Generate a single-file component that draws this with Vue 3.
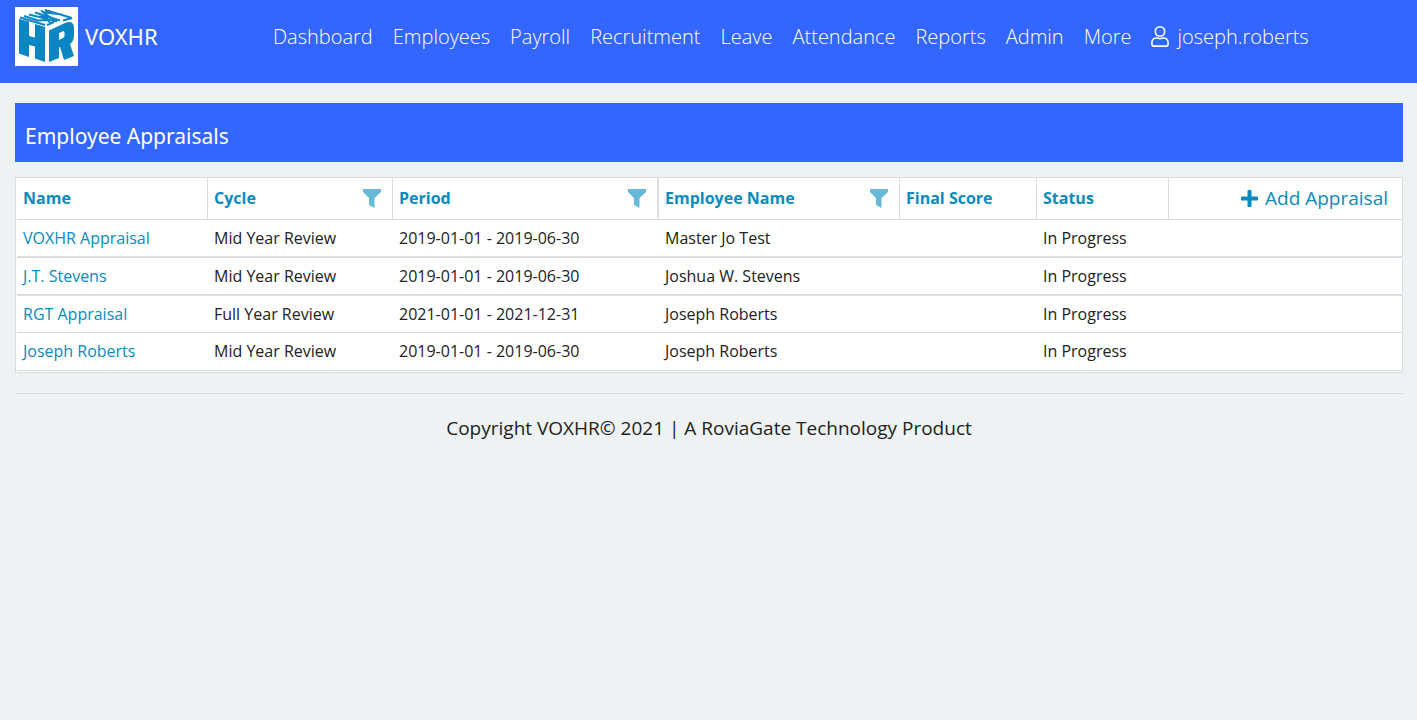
<script setup>
const navItems = ['Dashboard', 'Employees', 'Payroll', 'Recruitment', 'Leave', 'Attendance', 'Reports', 'Admin', 'More']

const columns = [
  { label: 'Name', key: 'name' },
  { label: 'Cycle', key: 'cycle', filter: true },
  { label: 'Period', key: 'period', filter: true },
  { label: 'Employee Name', key: 'employee', filter: true },
  { label: 'Final Score', key: 'score' },
  { label: 'Status', key: 'status' },
]

const rows = [
  { name: 'VOXHR Appraisal', cycle: 'Mid Year Review', period: '2019-01-01 - 2019-06-30', employee: 'Master Jo Test', score: '', status: 'In Progress' },
  { name: 'J.T. Stevens', cycle: 'Mid Year Review', period: '2019-01-01 - 2019-06-30', employee: 'Joshua W. Stevens', score: '', status: 'In Progress' },
  { name: 'RGT Appraisal', cycle: 'Full Year Review', period: '2021-01-01 - 2021-12-31', employee: 'Joseph Roberts', score: '', status: 'In Progress' },
  { name: 'Joseph Roberts', cycle: 'Mid Year Review', period: '2019-01-01 - 2019-06-30', employee: 'Joseph Roberts', score: '', status: 'In Progress' },
]
</script>

<template>
  <div class="page">
    <header class="topbar">
      <a class="brand" href="#">
        <svg class="logo" viewBox="0 0 63 59" aria-hidden="true">
          <rect width="63" height="59" fill="#fff" />
          <g fill="#0a86c3">
            <path d="M4 12l10 2.500V29l6 1.500V17l10 3v35l-10-3.500V39.500l-6-1.500v12L4 46.500z" />
            <path fill-rule="evenodd" d="M34 23.500L50 16c5-2 9-1 9 5v7c0 4-1 7-4 9l4 12-10 4-4-13-1 .5V51l-10 4zM44 26v7l4-2c1-.5 1.500-1.500 1.500-2.500v-3c0-1.500-1-1.500-2-1z" />
          </g>
          <g fill="none" stroke="#0a86c3" stroke-width="2">
            <path d="M5 10.500l25 7.500M9 9l14 4.500 11-.5M32 18l7-3M14 7.500l28 7M20 5.500l25 8M21 9.500l15 .5M26 3.500l12 9M30 3l27 8M27 5l20 2.500M31 10l4 6M48 13.500l9-2.500" />
          </g>
        </svg>
        <span>VOXHR</span>
      </a>
      <nav class="nav">
        <a v-for="item in navItems" :key="item" href="#">{{ item }}</a>
        <a class="user" href="#">
          <svg class="user-icon" viewBox="0 0 18 21" fill="none" stroke="currentColor" stroke-width="1.6" aria-hidden="true">
            <circle cx="9" cy="5.500" r="4.700" />
            <path d="M5.500 12C3 12 .9 13.800.9 16.500V18c0 1.200.8 2.100 2 2.100h12.200c1.200 0 2-.9 2-2.100v-1.500c0-2.700-2.100-4.500-4.600-4.500-1.500 0-1.800.7-3.500.7S7 12 5.500 12z" />
          </svg>
          <span>joseph.roberts</span>
        </a>
      </nav>
    </header>

    <main class="content">
      <h1 class="title">Employee Appraisals</h1>
      <div class="panel">
        <table class="grid">
          <colgroup>
            <col class="c-name"><col class="c-cycle"><col class="c-period"><col class="c-employee"><col class="c-score"><col class="c-status"><col>
          </colgroup>
          <thead>
            <tr>
              <th v-for="col in columns" :key="col.key" scope="col" :class="{ strong: col.key === 'period' }">
                <div class="head">
                  <span>{{ col.label }}</span>
                  <button v-if="col.filter" type="button" :aria-label="'Filter ' + col.label">
                    <svg viewBox="0 0 18 19" aria-hidden="true"><path d="M0 0h18v3l-6.500 6v10L6 16V9L0 3z" fill="#66b9d8" /></svg>
                  </button>
                </div>
              </th>
              <td class="actions">
                <a href="#">
                  <svg viewBox="0 0 17 17" aria-hidden="true"><path d="M8.500 1.500v14M1.500 8.500h14" stroke="#088bbd" stroke-width="4" stroke-linecap="round" /></svg>
                  <span>Add Appraisal</span>
                </a>
              </td>
            </tr>
          </thead>
          <tbody>
            <tr v-for="row in rows" :key="row.name">
              <td v-for="col in columns" :key="col.key">
                <a v-if="col.key === 'name'" href="#">{{ row.name }}</a>
                <template v-else>{{ row[col.key] }}</template>
              </td>
              <td></td>
            </tr>
          </tbody>
        </table>
      </div>
      <footer class="footer">Copyright VOXHR© 2021 | A RoviaGate Technology Product</footer>
    </main>
  </div>
</template>

<style>
body {
  background: #eef2f3;
}
</style>

<style scoped>
.page {
  font-family: "Open Sans", "Noto Sans", sans-serif;
  color: #222;
}
a {
  color: #088bbd;
  text-decoration: none;
}
.topbar {
  display: flex;
  align-items: flex-start;
  padding: 7px 15px 17px;
  background: #3366ff;
}
.brand {
  display: flex;
  align-items: center;
  gap: 7px;
  width: 258px;
  font-family: "Noto Sans", sans-serif;
  font-size: 22px;
  line-height: 28px;
  color: #fff;
}
.brand span {
  padding-bottom: 2px;
}
.logo {
  width: 63px;
  height: 59px;
}
.nav {
  display: flex;
  align-items: center;
  gap: 20px;
  height: 59px;
  font-size: 20px;
  font-weight: 300;
}
.nav a {
  color: #fff;
}
.user {
  display: flex;
  align-items: center;
  gap: 8px;
}
.user-icon {
  width: 18px;
  height: 21px;
}
.content {
  padding: 20px 14px 0 15px;
}
.title {
  margin: 0 0 15px;
  padding: 17px 10px 10px;
  background: #3366ff;
  color: #fff;
  font-family: "Noto Sans", sans-serif;
  font-size: 21px;
  font-weight: 400;
  line-height: 32px;
}
.panel {
  padding: 0 0 1px 1px;
  background: #fff;
  border: 1px solid #dadddf;
}
.grid {
  width: 100%;
  table-layout: fixed;
  border-collapse: separate;
  border-spacing: 0;
  font-size: 16px;
  line-height: 22px;
}
.c-name { width: 191px; }
.c-cycle { width: 185px; }
.c-period { width: 266px; }
.c-employee { width: 241px; }
.c-score { width: 137px; }
.c-status { width: 132px; }
.grid th,
.grid td {
  text-align: left;
  padding: 0 6px;
  border-bottom: 1px solid #dadddf;
}
.grid thead th,
.grid thead td {
  height: 40px;
  padding-bottom: 1px;
}
.grid th {
  border-right: 1px solid #dadddf;
  color: #088bbd;
  font-weight: 700;
}
.grid th.strong {
  border-right-width: 2px;
}
.head {
  display: flex;
  align-items: center;
  justify-content: space-between;
}
.head button {
  display: flex;
  margin: 0 5px 0 0;
  padding: 0;
  border: 0;
  background: none;
}
.head svg {
  width: 18px;
  height: 19px;
}
.grid tbody td {
  height: 36px;
}
.grid tbody tr:nth-child(-n + 2) td {
  border-bottom-width: 2px;
}
.grid tbody tr:last-child td {
  padding-bottom: 1px;
}
.grid .actions {
  padding-right: 14px;
}
.actions a {
  display: flex;
  align-items: center;
  justify-content: flex-end;
  gap: 7px;
  font-size: 19px;
}
.actions svg {
  width: 17px;
  height: 17px;
}
.footer {
  margin-top: 20px;
  padding-top: 20px;
  border-top: 1px solid #d5d9db;
  text-align: center;
  font-size: 19px;
  line-height: 28px;
}
</style>
